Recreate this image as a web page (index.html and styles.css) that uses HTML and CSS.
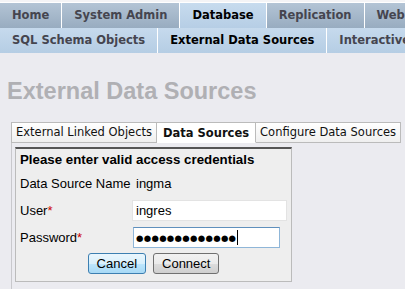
FILE: index.html
```html
<!DOCTYPE html>
<html>
<head>
    <meta name="viewport" content="width=device-width, initial-scale=1">
    <link rel="stylesheet" href="styles.css">
</head>

<body>
    <div class="top-nav">
        <a class="nav-tab">Home</a>
        <a class="nav-tab">System Admin</a>
        <a class="nav-tab active">Database</a>
        <a class="nav-tab">Replication</a>
        <a class="nav-tab">Web</a>
    </div>

    <div class="sub-nav">
        <a class="sub-tab">SQL Schema Objects</a>
        <a class="sub-tab active">External Data Sources</a>
        <a class="sub-tab">Interactive</a>
    </div>

    <h1 class="page-title">External Data Sources</h1>

    <div class="tab-box">
        <div class="tab-strip">
            <span class="tab">External Linked Objects</span>
            <span class="tab active">Data Sources</span>
            <span class="tab">Configure Data Sources</span>
        </div>

        <div class="tab-content">
            <form class="login-panel" onsubmit="event.preventDefault();">
                <p class="panel-title">Please enter valid access credentials</p>
                <div class="form-row">
                    <span class="label">Data Source Name</span>
                    <span class="value">ingma</span>
                </div>
                <div class="form-row">
                    <span class="label">User<em>*</em></span>
                    <input class="field" type="text" value="ingres">
                </div>
                <div class="form-row">
                    <span class="label">Password<em>*</em></span>
                    <div class="field field-focus">
                        <span class="dots">●●●●●●●●●●●●●</span><span class="caret"></span>
                    </div>
                </div>
                <div class="buttons">
                    <button class="btn btn-default" type="button">Cancel</button>
                    <button class="btn" type="submit">Connect</button>
                </div>
            </form>
        </div>
    </div>
</body>
</html>
```

FILE: styles.css
```css
* {
    box-sizing: border-box;
}

body {
    margin: 0;
    background-color: #ebebf0;
    font-family: 'Liberation Sans', Arial, sans-serif;
    font-size: 13px;
    color: #222;
    overflow: hidden;
    width: 405px;
    height: 289px;
}

/* Main navigation */
.top-nav {
    display: flex;
    overflow: hidden;
    white-space: nowrap;
    padding-top: 2px;
    background-color: #f4f4f6;
}

.nav-tab,
.sub-tab {
    font-family: 'DejaVu Sans', Verdana, sans-serif;
    font-weight: bold;
    font-size: 11.5px;
    flex-shrink: 0;
}

.nav-tab {
    height: 26px;
    line-height: 25px;
    padding: 0 12px;
    color: #45454f;
    background: linear-gradient(to bottom, #b3c4d5, #98acc0);
    border-top: 1px solid #fff;
    border-left: 1px solid #fff;
}

.nav-tab:first-child {
    border-left: none;
}

.nav-tab.active {
    color: #000;
    background: linear-gradient(to bottom, #c7dbee, #b6cee5);
}

.sub-nav {
    display: flex;
    overflow: hidden;
    white-space: nowrap;
    height: 25px;
    background: linear-gradient(to bottom, #c6daed, #b5cde4);
}

.sub-tab {
    line-height: 25px;
    padding: 0 12px;
    color: #45454f;
    border-right: 1px solid #fff;
}

.sub-tab.active {
    color: #000;
}

/* Page heading */
.page-title {
    margin: 24px 0 0 7px;
    font-size: 23.5px;
    color: #b0b0b4;
    line-height: 28px;
}

/* Tabbed box */
.tab-box {
    margin: 17px 0 0 11px;
}

.tab-strip {
    display: flex;
    white-space: nowrap;
}

.tab {
    font-family: 'DejaVu Sans', Verdana, sans-serif;
    font-size: 11.5px;
    padding: 2px 4px 3px;
    border: 1px solid #bbb;
    border-left: none;
    background: linear-gradient(to bottom, #ffffff, #efefef);
    color: #111;
}

.tab:first-child {
    border-left: 1px solid #bbb;
}

.tab.active {
    font-weight: bold;
    background: #fff;
    border-bottom-color: #fff;
    padding: 3px 6px 2px;
}

.tab-content {
    border-left: 1px solid #c8c8cc;
    padding: 4px 0 7px 3px;
}

/* Login form */
.login-panel {
    width: 277px;
    background-color: #eeeeee;
    border: 1px solid #bbb;
    border-top: 2px solid #555;
    padding: 3px 4px 7px 4px;
}

.panel-title {
    margin: 0 0 3px 0;
    font-weight: bold;
    font-size: 13.3px;
    color: #000;
}

.form-row {
    display: flex;
    align-items: center;
    height: 27px;
}

.label {
    width: 113px;
    color: #000;
}

.label em {
    font-style: normal;
    color: #c00;
}

.value {
    padding-left: 3px;
    color: #000;
}

.field {
    font-family: 'Liberation Sans', Arial, sans-serif;
    font-size: 13px;
    width: 155px;
    height: 21px;
    border: 1px solid #e3e3e3;
    background: #fff;
    padding: 1px 3px;
    margin: 0;
    outline: none;
}

.field-focus {
    display: flex;
    align-items: center;
    width: 147px;
    padding-left: 2px;
    border-color: #8fb6d8;
    border-top-color: #5f8fbc;
}

.dots {
    font-family: 'DejaVu Sans', sans-serif;
    font-size: 8.5px;
    letter-spacing: 0.3px;
    color: #000;
}

.caret {
    width: 1px;
    height: 15px;
    margin-left: 1px;
    background: #000;
}

.buttons {
    display: flex;
    justify-content: center;
    gap: 7px;
    padding-top: 2px;
}

.btn {
    font-family: 'Liberation Sans', Arial, sans-serif;
    font-size: 13px;
    height: 21px;
    padding: 0 8px;
    color: #000;
    border: 1px solid #707070;
    border-radius: 3px;
    background: linear-gradient(to bottom, #f2f2f2, #ebebeb 50%, #dddddd 51%, #cfcfcf);
}

.btn-default {
    border-color: #3c7fb1;
    background: linear-gradient(to bottom, #eaf6fd, #d9f0fc 50%, #bee6fd 51%, #a7d9f5);
}
```
